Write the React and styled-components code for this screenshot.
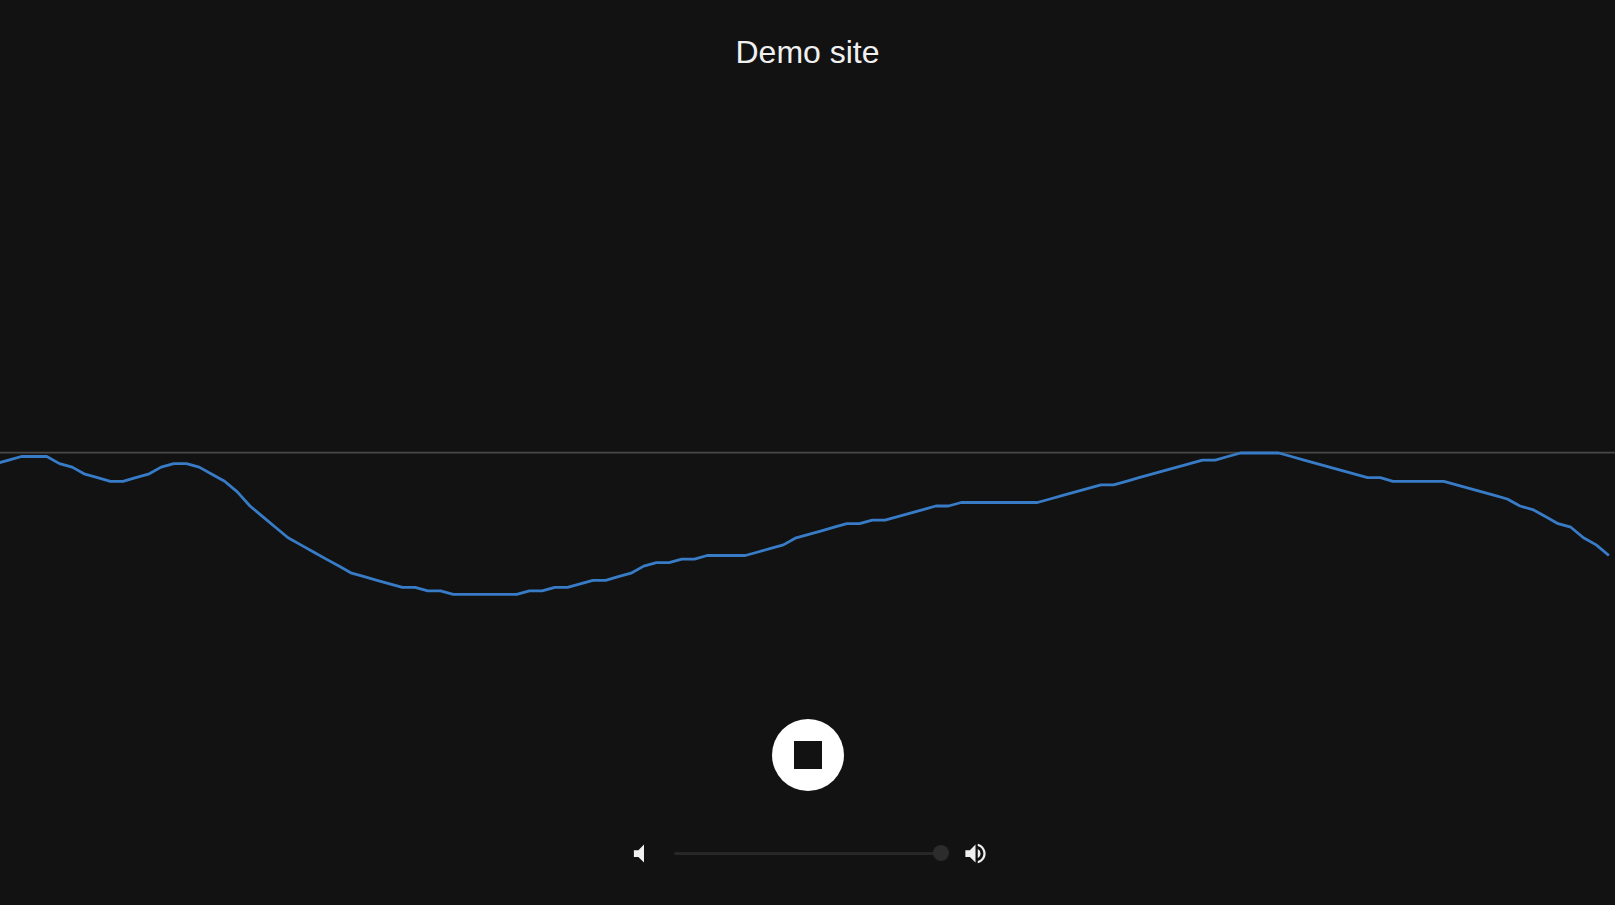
import React, { useState } from 'react';
import styled, { createGlobalStyle } from 'styled-components';
import { MdVolumeMute, MdVolumeUp } from 'react-icons/md';

const GlobalStyle = createGlobalStyle`
  * {
    box-sizing: border-box;
  }

  body {
    margin: 0;
    background-color: #121212;
    color: #f0f0f0;
    font-family: Helvetica, 'Liberation Sans', Arial, sans-serif;
  }
`;

// the wave and the content share one grid cell, so the wave lies behind
const Page = styled.main`
  display: grid;
  grid-template: minmax(100vh, auto) / minmax(0, 1fr);
  overflow: hidden;
`;

const Scope = styled.svg`
  grid-area: 1 / 1;
  width: 100%;
  height: 100vh;
`;

const Content = styled.div`
  grid-area: 1 / 1;
  z-index: 1;
  display: flex;
  flex-direction: column;
  align-items: center;
  justify-content: space-between;
  padding: 32px 24px 38px;
`;

const Title = styled.h1`
  margin: 0;
  font-size: 32px;
  font-weight: 400;
  line-height: 40px;
`;

const Controls = styled.div`
  display: flex;
  flex-direction: column;
  align-items: center;
  gap: 49px;
`;

const PlayButton = styled.button`
  display: flex;
  align-items: center;
  justify-content: center;
  width: 72px;
  height: 72px;
  padding: 0;
  border: none;
  border-radius: 50%;
  background-color: #fff;
  cursor: pointer;
`;

const StopIcon = styled.span`
  width: 28px;
  height: 28px;
  background-color: #121212;
`;

const PlayIcon = styled.span`
  margin-left: 6px;
  border-style: solid;
  border-width: 16px 0 16px 26px;
  border-color: transparent transparent transparent #121212;
`;

const VolumeRow = styled.div`
  display: flex;
  align-items: center;

  svg {
    width: 27px;
    height: 27px;
  }
`;

const Slider = styled.input`
  appearance: none;
  width: 275px;
  height: 16px;
  margin: 0 13px 0 21px;
  background: transparent;
  cursor: pointer;

  &::-webkit-slider-runnable-track {
    height: 3px;
    border-radius: 2px;
    background: #272727;
  }

  &::-webkit-slider-thumb {
    appearance: none;
    width: 16px;
    height: 16px;
    margin-top: -7px;
    border-radius: 50%;
    background: #2c2c2c;
  }
`;

// unsigned bytes, 128 is silence
const samples = [
  131, 130, 129, 129, 129, 131, 132, 134, 135, 136, 136, 135, 134, 132, 131, 131,
  132, 134, 136, 139, 143, 146, 149, 152, 154, 156, 158, 160, 162, 163, 164, 165,
  166, 166, 167, 167, 168, 168, 168, 168, 168, 168, 167, 167, 166, 166, 165, 164,
  164, 163, 162, 160, 159, 159, 158, 158, 157, 157, 157, 157, 156, 155, 154, 152,
  151, 150, 149, 148, 148, 147, 147, 146, 145, 144, 143, 143, 142, 142, 142, 142,
  142, 142, 142, 141, 140, 139, 138, 137, 137, 136, 135, 134, 133, 132, 131, 130,
  130, 129, 128, 128, 128, 128, 129, 130, 131, 132, 133, 134, 135, 135, 136, 136,
  136, 136, 136, 137, 138, 139, 140, 141, 143, 144, 146, 148, 149, 152, 154, 157,
];

const WIDTH = 1615;
const HEIGHT = 905;

const points = samples
  .map((value, i) => {
    const x = i * 12.7 - 4;
    const y = (value / 256) * HEIGHT + 0.5;
    return `${x.toFixed(1)},${y.toFixed(1)}`;
  })
  .join(' ');

const Waveform = () => (
  <Scope viewBox={`0 0 ${WIDTH} ${HEIGHT}`} preserveAspectRatio="none" aria-hidden="true">
    <line x1="0" y1="452.6" x2={WIDTH} y2="452.6" stroke="#484848" strokeWidth="1.8" />
    <polyline points={points} fill="none" stroke="#387cc8" strokeWidth="2.8" strokeLinejoin="round" />
  </Scope>
);

const App = () => {
  const [playing, setPlaying] = useState(true);
  const [volume, setVolume] = useState(100);

  return (
    <>
      <GlobalStyle />
      <Page>
        <Waveform />
        <Content>
          <Title>Demo site</Title>
          <Controls>
            <PlayButton
              type="button"
              aria-label={playing ? 'Stop' : 'Play'}
              onClick={() => setPlaying(!playing)}
            >
              {playing ? <StopIcon /> : <PlayIcon />}
            </PlayButton>
            <VolumeRow>
              <MdVolumeMute />
              <Slider
                type="range"
                min="0"
                max="100"
                aria-label="Volume"
                value={volume}
                onChange={(e) => setVolume(Number(e.target.value))}
              />
              <MdVolumeUp />
            </VolumeRow>
          </Controls>
        </Content>
      </Page>
    </>
  );
};

export default App;
